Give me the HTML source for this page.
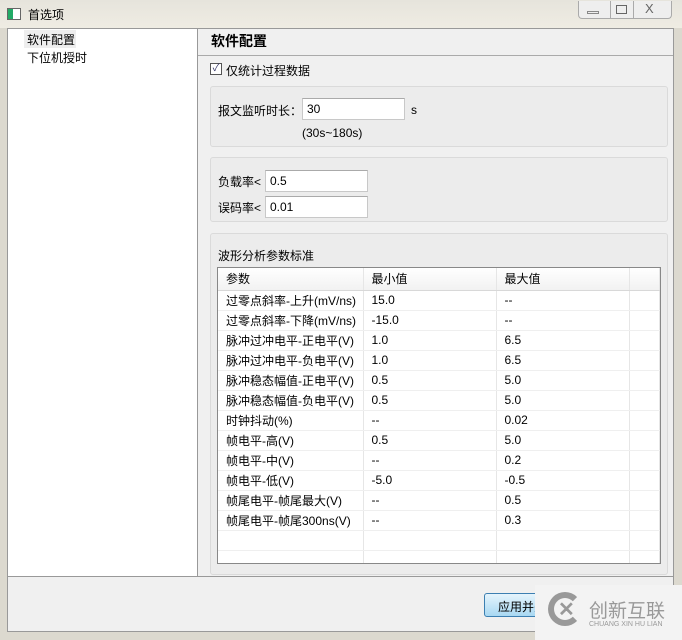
<!DOCTYPE html>
<html><head><meta charset="utf-8"><style>
*{margin:0;padding:0;box-sizing:border-box}
body{width:682px;height:640px;overflow:hidden;background:#dcd9cf;font-family:"Liberation Sans","Noto Sans CJK SC",sans-serif;font-size:12px;color:#000;position:relative}
.a{position:absolute}
.title{left:0;top:0;width:682px;height:28px;background:linear-gradient(#e6e4dc,#efece3)}
.inp{background:#fff;border:1px solid #c8c8c8;border-top-color:#aaa;padding:3px 4px;height:22px}
.gb{border:1px solid #dadada;border-radius:3px;background:#ececec}
table{border-collapse:collapse;width:100%}
td{border-right:1px solid #e6e6e6;border-bottom:1px solid #efefef;height:20px;padding:0 0 0 8px;white-space:nowrap}
tr.h td{height:22px;background:linear-gradient(#fff,#f2f2f2);border-bottom:1px solid #d8d8d8}
</style></head><body>
<div class="a title"></div>
<div class="a" style="left:7px;top:8px;width:14px;height:12px;border:1px solid #666;background:linear-gradient(90deg,#2a6 0 5px,#fff 5px)"></div>
<div class="a" style="left:28px;top:6px">首选项</div>
<div class="a" style="left:578px;top:1px;width:94px;height:18px;border:1px solid #aaa;border-top:none;border-radius:0 0 4px 4px;background:#eee"></div>
<div class="a" style="left:610px;top:1px;width:1px;height:18px;background:#aaa"></div>
<div class="a" style="left:633px;top:1px;width:1px;height:18px;background:#aaa"></div>
<div class="a" style="left:587px;top:11px;width:12px;height:3px;border:1px solid #888"></div>
<div class="a" style="left:616px;top:5px;width:11px;height:9px;border:1px solid #666"></div>
<div class="a" style="left:645px;top:1px;color:#666;font-size:13px">X</div>
<div class="a" style="left:7px;top:28px;width:191px;height:549px;background:#fff;border:1px solid #999;border-right:none"></div>
<div class="a" style="left:24px;top:30px;width:52px;height:18px;background:#eee"></div>
<div class="a" style="left:27px;top:31px">软件配置</div>
<div class="a" style="left:27px;top:49px">下位机授时</div>
<div class="a" style="left:197px;top:28px;width:477px;height:549px;background:#f0f0f0;border:1px solid #999"></div>
<div class="a" style="left:198px;top:55px;width:475px;height:1px;background:#aaa"></div>
<div class="a" style="left:211px;top:31px;font-size:14px;font-weight:bold">软件配置</div>
<div class="a" style="left:210px;top:63px;width:12px;height:12px;border:1px solid #555;background:#fff;font-size:10px;line-height:10px;text-align:center;color:#336">✓</div>
<div class="a" style="left:226px;top:62px">仅统计过程数据</div>
<div class="a gb" style="left:210px;top:86px;width:458px;height:61px"></div>
<div class="a" style="left:218px;top:102px">报文监听时长：</div>
<div class="a inp" style="left:302px;top:98px;width:103px">30</div>
<div class="a" style="left:411px;top:103px">s</div>
<div class="a" style="left:302px;top:126px">(30s~180s)</div>
<div class="a gb" style="left:210px;top:157px;width:458px;height:65px"></div>
<div class="a" style="left:218px;top:173px">负载率&lt;</div>
<div class="a inp" style="left:265px;top:170px;width:103px">0.5</div>
<div class="a" style="left:218px;top:199px">误码率&lt;</div>
<div class="a inp" style="left:265px;top:196px;width:103px">0.01</div>
<div class="a gb" style="left:210px;top:233px;width:458px;height:342px"></div>
<div class="a" style="left:218px;top:247px">波形分析参数标准</div>
<div class="a" style="left:217px;top:267px;width:444px;height:297px;background:#fff;border:1px solid #888;overflow:hidden">
<table>
<colgroup><col style="width:145px"><col style="width:133px"><col style="width:133px"><col></colgroup>
<tr class="h"><td>参数</td><td>最小值</td><td>最大值</td><td></td></tr>
<tr><td>过零点斜率-上升(mV/ns)</td><td>15.0</td><td>--</td><td></td></tr>
<tr><td>过零点斜率-下降(mV/ns)</td><td>-15.0</td><td>--</td><td></td></tr>
<tr><td>脉冲过冲电平-正电平(V)</td><td>1.0</td><td>6.5</td><td></td></tr>
<tr><td>脉冲过冲电平-负电平(V)</td><td>1.0</td><td>6.5</td><td></td></tr>
<tr><td>脉冲稳态幅值-正电平(V)</td><td>0.5</td><td>5.0</td><td></td></tr>
<tr><td>脉冲稳态幅值-负电平(V)</td><td>0.5</td><td>5.0</td><td></td></tr>
<tr><td>时钟抖动(%)</td><td>--</td><td>0.02</td><td></td></tr>
<tr><td>帧电平-高(V)</td><td>0.5</td><td>5.0</td><td></td></tr>
<tr><td>帧电平-中(V)</td><td>--</td><td>0.2</td><td></td></tr>
<tr><td>帧电平-低(V)</td><td>-5.0</td><td>-0.5</td><td></td></tr>
<tr><td>帧尾电平-帧尾最大(V)</td><td>--</td><td>0.5</td><td></td></tr>
<tr><td>帧尾电平-帧尾300ns(V)</td><td>--</td><td>0.3</td><td></td></tr>
<tr><td></td><td></td><td></td><td></td></tr>
<tr><td></td><td></td><td></td><td></td></tr>
</table></div>
<div class="a" style="left:7px;top:577px;width:667px;height:55px;background:#f0f0f0;border:1px solid #999;border-top:none"></div>
<div class="a" style="left:484px;top:593px;width:90px;height:24px;border:1px solid #3c7fb1;border-radius:3px;background:linear-gradient(#e5f4fc,#a8d8f2);padding:4px 0 0 13px">应用并关闭</div>
<div class="a" style="left:535px;top:585px;width:147px;height:55px;background:#f3f3f3"></div>
<div class="a" style="left:548px;top:592px;width:34px;height:34px;border:6px solid #999;border-radius:50%;border-right-color:transparent"></div>
<div class="a" style="left:558px;top:597px;font-size:20px;font-weight:bold;color:#999">✕</div>
<div class="a" style="left:589px;top:596px;font-size:19px;color:#999;white-space:nowrap">创新互联</div>
<div class="a" style="left:589px;top:621px;font-size:7px;color:#999;white-space:nowrap">CHUANG XIN HU LIAN</div>
</body></html>
